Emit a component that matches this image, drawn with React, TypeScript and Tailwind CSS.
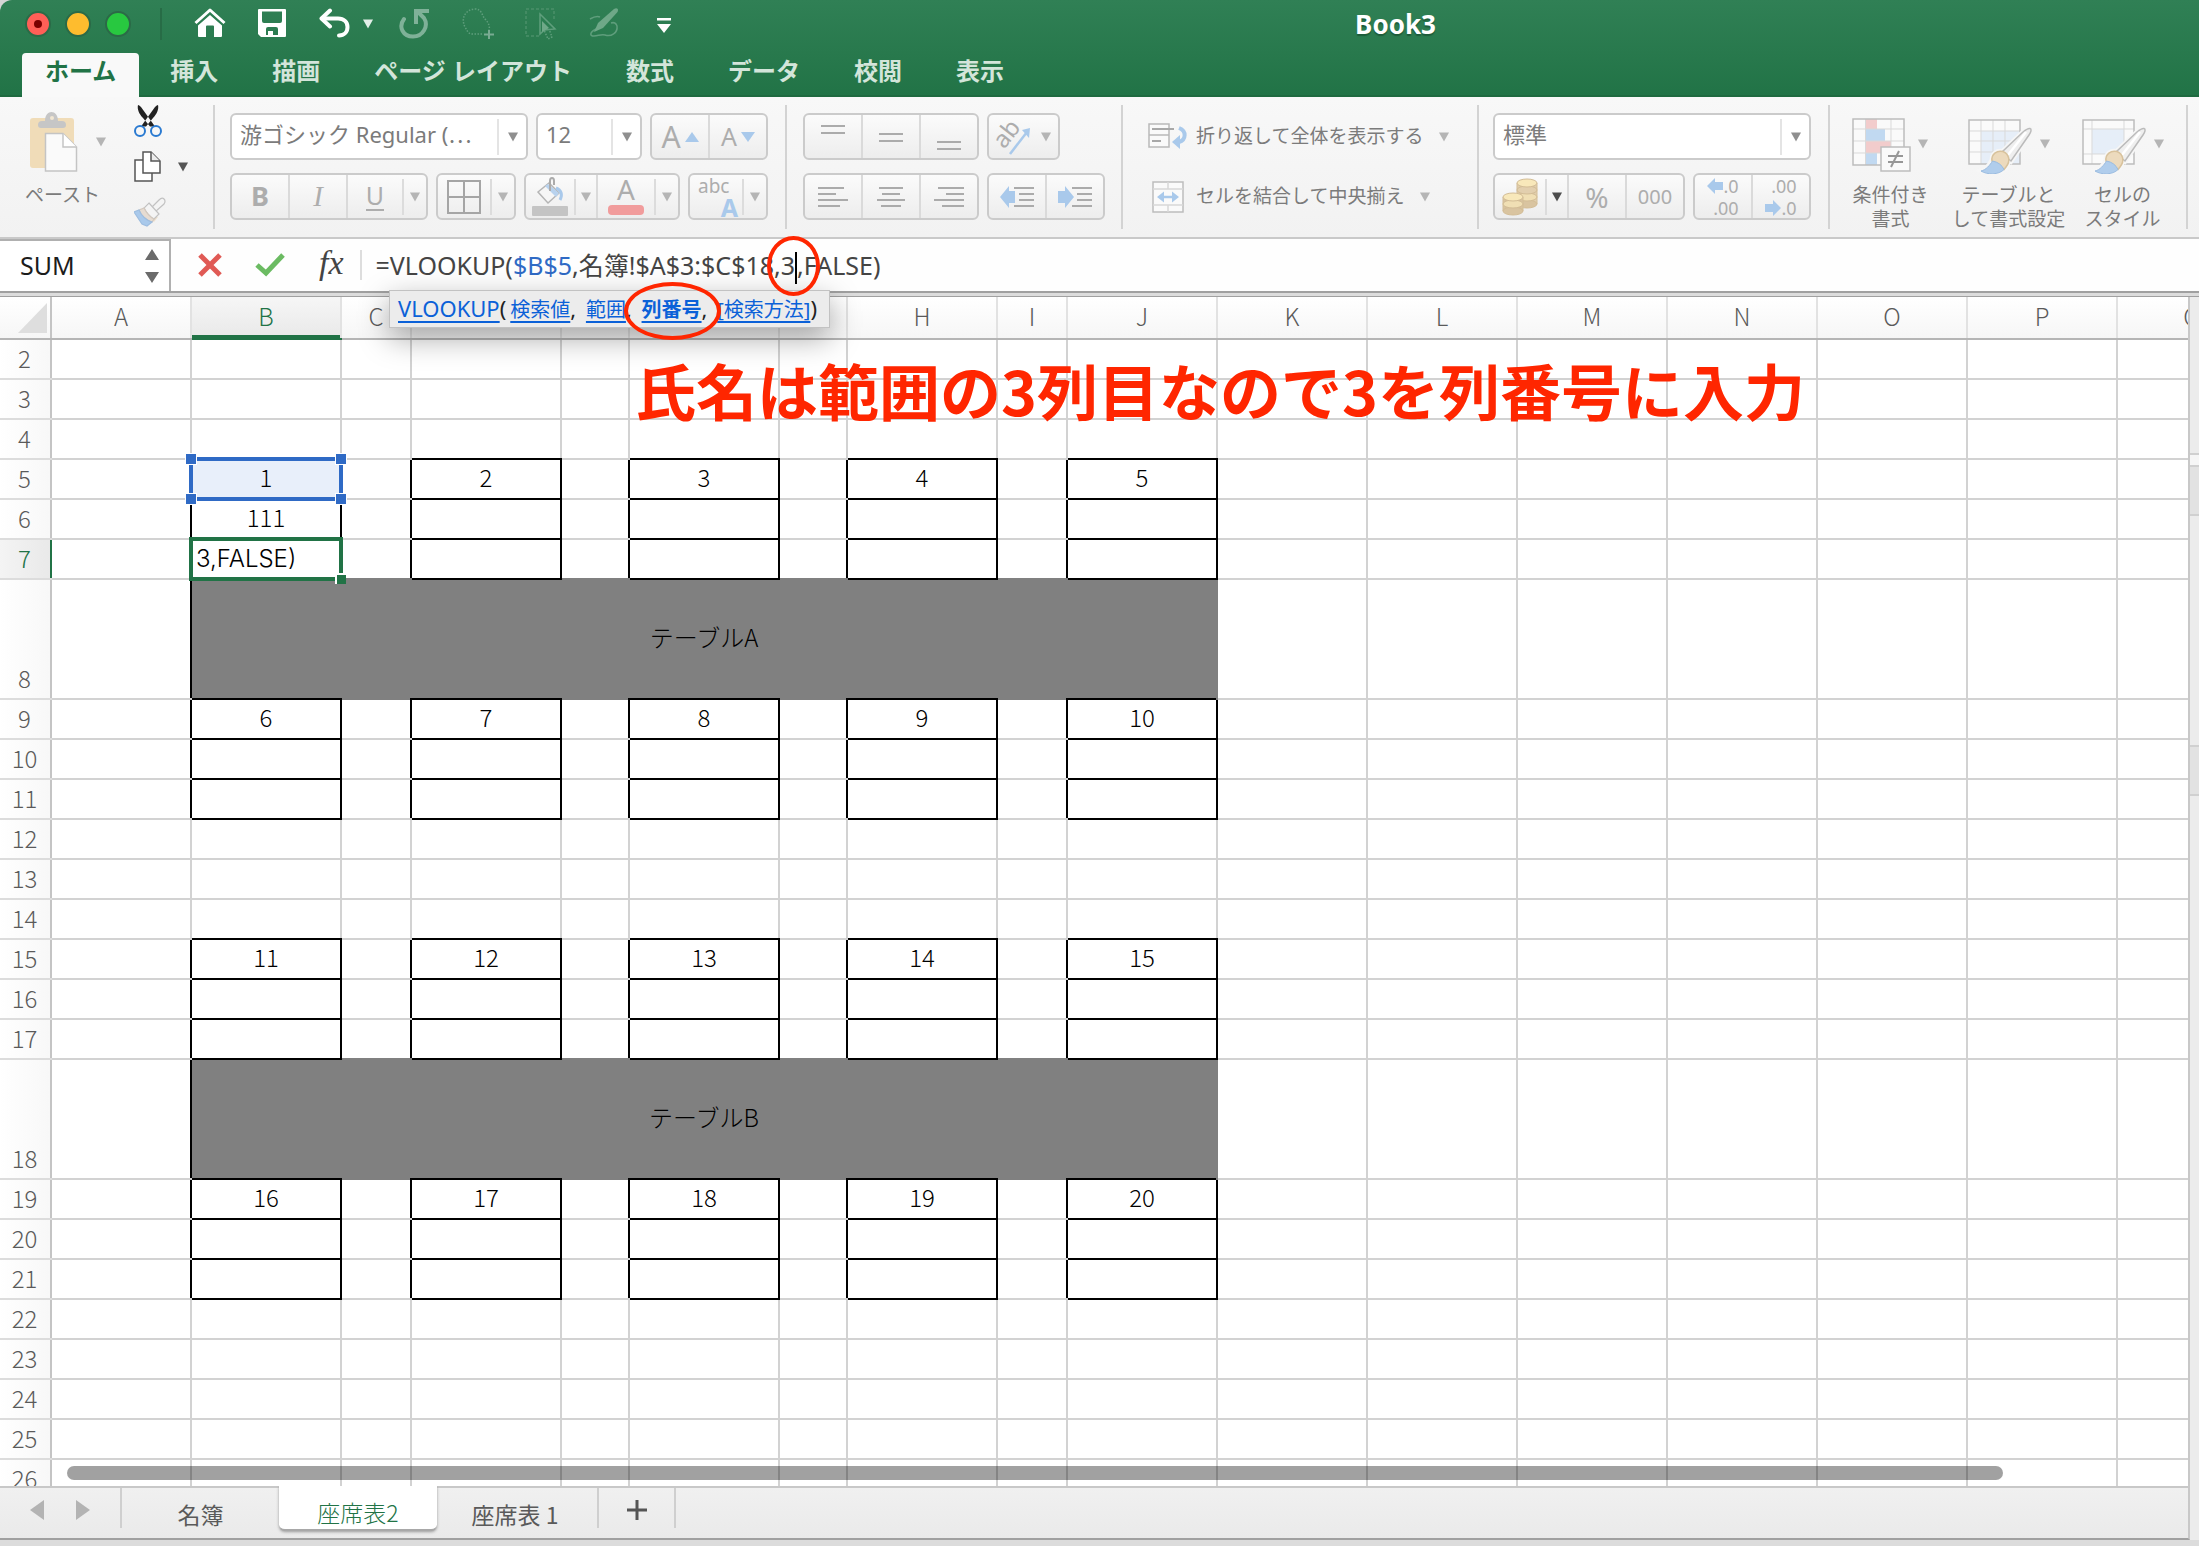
import React, { type ReactNode } from "react";

type Kids = { children?: ReactNode };

const COLS: { id: string; w: string }[] = [
  { id: "A", w: "w-[140px]" },
  { id: "B", w: "w-[150px]" },
  { id: "C", w: "w-[70px]" },
  { id: "D", w: "w-[150px]" },
  { id: "E", w: "w-[68px]" },
  { id: "F", w: "w-[150px]" },
  { id: "G", w: "w-[68px]" },
  { id: "H", w: "w-[150px]" },
  { id: "I", w: "w-[70px]" },
  { id: "J", w: "w-[150px]" },
  { id: "K", w: "w-[150px]" },
  { id: "L", w: "w-[150px]" },
  { id: "M", w: "w-[150px]" },
  { id: "N", w: "w-[150px]" },
  { id: "O", w: "w-[150px]" },
  { id: "P", w: "w-[150px]" },
  { id: "Q", w: "w-[150px]" },
];

const ROWS = Array.from({ length: 25 }, (_, i) => i + 2);
const SEAT_COLS = [1, 3, 5, 7, 9];
const SEAT_START: Record<number, number> = { 5: 1, 9: 6, 15: 11, 19: 16 };
const TABLES: Record<number, string> = { 8: "テーブルA", 18: "テーブルB" };

const boxed = (r: number, c: number) =>
  SEAT_COLS.includes(c) && [5, 6, 7, 9, 10, 11, 15, 16, 17, 19, 20, 21].includes(r);

const shaded = (r: number, c: number) => TABLES[r] !== undefined && c >= 1 && c <= 9;

const edge = (r: number, c: number) => {
  const me = boxed(r, c);
  const tableLeft = c === 0 && TABLES[r] !== undefined;
  return [
    me || boxed(r - 1, c) ? "border-t-black" : shaded(r - 1, c) ? "border-t-[#808080]" : "border-t-[#d2d2d2]",
    me || boxed(r + 1, c) ? "border-b-black" : shaded(r + 1, c) ? "border-b-[#808080]" : "border-b-[#d2d2d2]",
    me || boxed(r, c - 1) ? "border-l-black" : "border-l-[#d2d2d2]",
    me || boxed(r, c + 1) || tableLeft ? "border-r-black" : "border-r-[#d2d2d2]",
  ].join(" ");
};

function cellText(r: number, c: number): string {
  if (r === 6 && c === 1) return "111";
  const i = SEAT_COLS.indexOf(c);
  if (SEAT_START[r] !== undefined && i >= 0) return String(SEAT_START[r] + i);
  return "";
}

function Caret({ tone = "text-[#b5b5b5]" }: { tone?: string }) {
  return (
    <svg className={"h-[10px] w-[10px] shrink-0 " + tone} viewBox="0 0 10 10" fill="currentColor">
      <path d="M0 0.5H10L5 9.5Z" />
    </svg>
  );
}

function Separator() {
  return <div className="h-[124px] w-[2px] shrink-0 bg-[#d3d3d3]" />;
}

function Group({ children }: Kids) {
  return (
    <div className="flex h-[47px] shrink-0 rounded-md border-2 border-[#cbcbcb] bg-linear-to-b from-[#fbfbfb] to-[#ededed] text-[#adadad]">
      {children}
    </div>
  );
}

function Btn({ w, label, last, children }: Kids & { w: string; label: string; last?: boolean }) {
  return (
    <button
      aria-label={label}
      className={
        "flex h-full items-center justify-center " + w + (last ? "" : " border-r-2 border-[#dadada]")
      }
    >
      {children}
    </button>
  );
}

function SplitCaret({ label, tone, edged }: { label: string; tone?: string; edged?: boolean }) {
  return (
    <button
      aria-label={label}
      className={"flex h-full w-[24px] items-center " + (edged ? "border-r-2 border-[#dadada]" : "")}
    >
      <span className="h-9 w-[2px] bg-[#dcdcdc]" />
      <span className="flex flex-1 justify-center">
        <Caret tone={tone} />
      </span>
    </button>
  );
}

function Select({ w, label, value }: { w: string; label: string; value: string }) {
  return (
    <label
      className={
        "flex h-[47px] shrink-0 items-center rounded-md border-2 border-[#cbcbcb] bg-white text-[22px] text-[#7b7b7b] " + w
      }
    >
      <select
        aria-label={label}
        className="h-full min-w-0 flex-1 appearance-none bg-transparent pb-1 pl-2 outline-none"
      >
        <option>{value}</option>
      </select>
      <span className="h-9 w-[2px] bg-[#e4e4e4]" />
      <span className="flex w-[27px] justify-center">
        <Caret tone="text-[#8f8f8f]" />
      </span>
    </label>
  );
}

function Lines({ rows }: { rows: [number, number, number][] }) {
  return (
    <svg className="h-[40px] w-[40px]" viewBox="0 0 40 40" stroke="#ababab" strokeWidth="2">
      {rows.map(([x1, x2, y], i) => (
        <path key={i} d={`M${x1} ${y}H${x2}`} />
      ))}
    </svg>
  );
}

function Brush() {
  return (
    <>
      <path
        d="M62 21.500C64 22 63 25 61 28L43 54 33 46 55 25C58 22.500 60 21 62 21.500ZM24 53C24 47 29 43 35 44.500C41 47 43 54 38 60L36 62.500C30 68 18 67.500 13 64C18 63 21 59 24 53Z"
        fill="#f6f6f6"
        stroke="#f6f6f6"
        strokeWidth="5"
      />
      <path d="M62 21.500C64 22 63 25 61 28L43 54 33 46 55 25C58 22.500 60 21 62 21.500Z" fill="#efefef" stroke="#bbbbbb" strokeWidth="1.500" />
      <path d="M58 25L40 48" stroke="#ffffff" strokeWidth="2.500" />
      <path d="M24 54C23 47 29 43 35 44.500C41 47 43 54 38 60L36 62.500Z" fill="#ecdabd" stroke="#d8c29c" strokeWidth="1.500" />
      <path d="M24.500 54C22 58 18 63 13 64C19 68 31 68 36 62.500C34 58 30 55 24.500 54Z" fill="#b0cdec" stroke="#9bbce0" strokeWidth="1" />
    </>
  );
}

function TitleBar() {
  return (
    <div className="flex h-[48px] items-center pr-20 pl-[25px] text-white">
      <div className="flex gap-[14px]">
        <button aria-label="閉じる" className="flex size-[26px] items-center justify-center rounded-full border-2 border-[#2b6a47] bg-[#ff5f57]">
          <span className="size-2 rounded-full bg-[#7a0000]" />
        </button>
        <button aria-label="しまう" className="size-[26px] rounded-full border-2 border-[#2b6a47] bg-[#febc2e]" />
        <button aria-label="拡大" className="size-[26px] rounded-full border-2 border-[#2b6a47] bg-[#28c840]" />
      </div>
      <span className="ml-[29px] h-8 w-[2px] bg-[#276c46]" />
      <div className="ml-8 flex items-center">
        <button aria-label="ホーム">
          <svg className="h-8 w-8" viewBox="0 0 32 32" fill="none" stroke="#fff">
            <path d="M1.500 15 16 2 30.500 15" strokeWidth="3" strokeLinejoin="round" />
            <path d="M4 17.500 16 7 28 17.500V28Q28 29 27 29H20V18.500Q20 17.500 19 17.500H13Q12 17.500 12 18.500V29H5Q4 29 4 28Z" fill="#fff" stroke="none" />
          </svg>
        </button>
        <button aria-label="保存" className="ml-8">
          <svg className="h-8 w-7" viewBox="0 0 28 32">
            <path fillRule="evenodd" fill="#fff" d="M1 1H27Q28 1 28 2V28Q28 29 27 29H3L0 26V2Q0 1 1 1ZM4 3.500V13Q4 15 6 15H22Q24 15 24 13V3.500ZM10 19Q8 19 8 21V27H10V23H15V27H20V21Q20 19 18 19Z" />
          </svg>
        </button>
        <button aria-label="元に戻す" className="ml-[33px]">
          <svg className="h-8 w-8" viewBox="0 0 32 32" fill="none" stroke="#fff" strokeWidth="4" strokeLinecap="round" strokeLinejoin="round">
            <path d="M11 2.500 2.500 10.500 11 18.500" />
            <path d="M3 10.500H19C25 10.500 28.500 14 28.500 19S25 27.500 20 27.500" />
          </svg>
        </button>
        <button aria-label="元に戻すの履歴" className="ml-3">
          <Caret tone="text-[#e3efe8]" />
        </button>
        <button aria-label="やり直し" className="ml-[26px]">
          <svg className="h-8 w-8" viewBox="0 0 32 32" fill="none" stroke="#7fb198" strokeWidth="4">
            <path strokeLinecap="round" d="M5 11C-1 19 4 28.500 14 28.500S30 18 25 10L19 4" />
            <path d="M30 3H17V16" />
          </svg>
        </button>
        <button aria-label="図形を追加" className="ml-[31px]">
          <svg className="h-8 w-8" viewBox="0 0 32 32" fill="none" stroke="#5f9e7c" strokeWidth="1.500">
            <path strokeDasharray="1.500 1.500" d="M20 26H10C6 26 5 22 3 19C-2 9 5 1 13 1C20 1 20 8 23 11C27 15 28 19 27 22" />
            <path strokeWidth="2" stroke="#79ab92" d="M27 22V31M22 26.500H32" />
          </svg>
        </button>
        <button aria-label="オブジェクトの選択" className="ml-[31px]">
          <svg className="h-8 w-8" viewBox="0 0 32 32" fill="none" stroke="#5f9e7c" strokeWidth="1.500">
            <path strokeDasharray="3 2" stroke="#4b9069" d="M14 28H1V1H29V12" />
            <path d="M15 6V26L19.500 22L30 21Z" />
            <path fill="#6fa888" stroke="none" d="M17 13V24L24 20Z" />
            <path strokeDasharray="1.500 1.500" d="M19.500 23L23 31L27 29L24 21" />
          </svg>
        </button>
        <button aria-label="インク" className="ml-8">
          <svg className="h-8 w-8" viewBox="0 0 32 32" fill="none" stroke="#5f9e7c" strokeWidth="1.500">
            <path d="M1 11C6 8 9 8 11 9M7 21C1 24 0 28 5 28C9 28 12 26 16 27C22 29 29 25 28 18C27 15 25 14 22 15" />
            <path fill="#6fa888" d="M25 1C28-1 30 1 28.500 4L14 20 5 24 9 15Z" stroke="none" />
          </svg>
        </button>
        <button aria-label="ツールバーのカスタマイズ" className="ml-[35px]">
          <svg className="h-8 w-4" viewBox="0 0 16 32" fill="#fff">
            <path d="M1 10H15V12.500H1ZM1 16H15L8 25Z" />
          </svg>
        </button>
      </div>
      <h1 className="flex-1 text-center text-[26px] font-bold [text-shadow:0_2px_1px_#1d5c3a]">Book3</h1>
    </div>
  );
}

function Tabs() {
  const rest = ["挿入", "描画", "ページ レイアウト", "数式", "データ", "校閲", "表示"];
  return (
    <nav className="flex h-[49px] items-end gap-2 border-b-2 border-[#1f6a40] pl-[22px] text-[24px] font-bold">
      <button className="-mb-[2px] h-[44px] rounded-t-[4px] bg-[#f9f9f9] px-[23px] pb-2 leading-9 text-[#217346]">ホーム</button>
      {rest.map((t) => (
        <button key={t} className="h-[42px] px-[23px] pb-[6px] leading-9 text-[#d3e5da]">
          {t}
        </button>
      ))}
    </nav>
  );
}

function BigButton({ lines, children }: Kids & { lines: string[] }) {
  return (
    <button className="flex flex-col items-center text-[19px] leading-6 text-[#7b7b7b]">
      <span className="flex h-[78px] items-center gap-[6px]">
        {children}
        <Caret />
      </span>
      {lines.map((l) => (
        <span key={l} className="whitespace-nowrap">{l}</span>
      ))}
    </button>
  );
}

function Ribbon() {
  return (
    <div className="flex h-[140px] items-start overflow-hidden bg-linear-to-b from-[#f8f8f8] to-[#f2f2f2] pt-2">
      <div className="flex w-[119px] shrink-0 flex-col pl-[25px] text-[19px] text-[#7b7b7b]">
        <button className="flex h-[74px] items-center gap-[18px] pl-[5px]" aria-label="ペースト">
          <svg className="h-[60px] w-[48px]" viewBox="0 0 48 60">
            <rect x="0" y="6" width="44" height="50" rx="3" fill="#f0dcb8" />
            <path d="M8 13Q8 9 12 9H15C15-3 28-3 28 9H32Q36 9 36 13Q36 16 33 16H11Q8 16 8 13Z" fill="#c6c6c6" />
            <circle cx="22" cy="6" r="2" fill="#f2e7d2" />
            <path d="M15.500 21.500H33L46.500 35V59H15.500Z" fill="#fafafa" stroke="#c4c4c4" strokeWidth="1.500" />
            <path d="M33 21.500V35H46.500" fill="#fff" stroke="#c4c4c4" strokeWidth="1.500" />
          </svg>
          <Caret />
        </button>
        <span className="leading-8">ペースト</span>
      </div>
      <div className="flex w-[94px] shrink-0 flex-col pl-[15px]">
        <button aria-label="切り取り" className="h-8 w-8">
          <svg className="h-8 w-8" viewBox="0 0 32 32" fill="none">
            <path d="M4 0C3 4 5 9 9 13L16 21.500H21L18.500 18 7 2Q5 0 4 0ZM24 0C25 4 23 9 19 13L12 21.500H7L9.500 18 21 2Q23 0 24 0Z" fill="#222" />
            <circle cx="6" cy="26" r="5" stroke="#2a7ad1" strokeWidth="2" />
            <circle cx="22" cy="26" r="5" stroke="#2a7ad1" strokeWidth="2" />
          </svg>
        </button>
        <div className="mt-[14px] flex items-center gap-3">
          <button aria-label="コピー">
            <svg className="h-8 w-8" viewBox="0 0 32 32" fill="#fff" stroke="#555" strokeWidth="1.500">
              <path d="M1 9H18V30H1Z" />
              <path d="M9 1H17L26 10V22H9Z" />
              <path d="M17 1V10H26" fill="#ececec" />
            </svg>
          </button>
          <button aria-label="コピーのオプション">
            <Caret tone="text-[#555555]" />
          </button>
        </div>
        <button aria-label="書式のコピー" className="mt-[14px] h-8 w-8">
          <svg className="h-8 w-8" viewBox="0 0 32 32" strokeWidth="1.200">
            <path d="M30 2Q32 4 30 7L21 15L17 11L25 3Q28 0 30 2Z" fill="#f4f4f4" stroke="#c2c2c2" />
            <path d="M6 11L13 16L24 20L20 25Z" fill="#ecdfcd" />
            <path d="M15 6L25 17L20 22Q14 19 10 11Z" fill="#f4f4f4" stroke="#c2c2c2" />
            <path d="M10 11Q14 19 20 22L18 25C12 23 7 18 5 13Z" fill="#e6dcd2" stroke="#d2c8be" />
            <path d="M5 13C7 18 12 23 18 25L13 29L8 27L0 15Z" fill="#a9c9eb" stroke="#9dbde0" />
          </svg>
        </button>
      </div>
      <Separator />

      <div className="flex w-[570px] shrink-0 flex-col gap-[13px] pt-2 pl-[15px]">
        <div className="flex gap-2">
          <Select w="w-[298px]" label="フォント" value="游ゴシック Regular (⋯" />
          <Select w="w-[106px]" label="フォント サイズ" value="12" />
          <Group>
            <Btn w="w-[58px]" label="フォント サイズの拡大">
              <span className="text-[30px] leading-10">A</span>
              <svg className="ml-1 h-3 w-[14px]" viewBox="0 0 14 12"><path fill="#a9c9eb" d="M0 11H14L7 1Z" /></svg>
            </Btn>
            <Btn w="w-[56px]" label="フォント サイズの縮小" last>
              <span className="text-[25px]">A</span>
              <svg className="ml-1 h-3 w-[14px]" viewBox="0 0 14 12"><path fill="#a9c9eb" d="M0 1H14L7 11Z" /></svg>
            </Btn>
          </Group>
        </div>
        <div className="flex gap-2">
          <Group>
            <Btn w="w-[58px]" label="太字"><b className="text-[27px]">B</b></Btn>
            <Btn w="w-[58px]" label="斜体"><i className="font-['Liberation_Serif'] text-[29px]">I</i></Btn>
            <button aria-label="下線" className="flex w-[54px] items-center justify-center text-[25px]">
              <span className="border-b-2 border-[#adadad] leading-[27px]">U</span>
            </button>
            <SplitCaret label="下線のオプション" />
          </Group>
          <Group>
            <button aria-label="罫線" className="flex w-[52px] items-center justify-center">
              <svg className="h-[34px] w-[34px]" viewBox="0 0 34 34" fill="none" stroke="#a5a5a5" strokeWidth="2">
                <path d="M1 1H33V33H1ZM17 1V33M1 17H33" />
              </svg>
            </button>
            <SplitCaret label="罫線のオプション" />
          </Group>
          <Group>
            <button aria-label="塗りつぶしの色" className="flex w-[48px] items-center justify-center">
              <svg className="h-[40px] w-[36px]" viewBox="0 0 36 40" fill="none">
                <rect y="29" width="36" height="10" rx="1" fill="#c4c4c4" />
                <path d="M17 6L27 16L16 26L6 15Z" fill="#f6f6f6" stroke="#b5b5b5" strokeWidth="1.500" />
                <path d="M13 9L24 20L27 16L16 7Z" fill="#b8d2ee" />
                <path d="M24 11C29 13 31 17 28 23" stroke="#a9c9eb" strokeWidth="3" />
                <path d="M18 14V4C18 0 22 0 22 4V8" stroke="#ababab" strokeWidth="2" />
              </svg>
            </button>
            <SplitCaret label="塗りつぶしの色の一覧" edged />
            <button aria-label="フォントの色" className="flex w-[56px] flex-col items-center justify-start">
              <span className="h-7 text-[28px] leading-7">A</span>
              <span className="mt-[2px] h-[10px] w-9 rounded-sm bg-[#f19c9c]" />
            </button>
            <SplitCaret label="フォントの色の一覧" />
          </Group>
          <Group>
            <button aria-label="ふりがな" className="flex w-[52px] flex-col justify-center text-left">
              <span className="pl-2 text-[19px] leading-5">abc</span>
              <span className="pr-1 text-right text-[25px] leading-[22px] font-bold text-[#a9c9eb]">A</span>
            </button>
            <SplitCaret label="ふりがなのオプション" />
          </Group>
        </div>
      </div>
      <Separator />

      <div className="flex w-[334px] shrink-0 flex-col gap-[13px] pt-2 pl-4">
        <div className="flex gap-2">
          <Group>
            <Btn w="w-[58px]" label="上揃え"><Lines rows={[[8, 32, 9], [8, 32, 16]]} /></Btn>
            <Btn w="w-[58px]" label="上下中央揃え"><Lines rows={[[8, 32, 17], [8, 32, 24]]} /></Btn>
            <Btn w="w-[56px]" label="下揃え" last><Lines rows={[[8, 32, 25], [8, 32, 32]]} /></Btn>
          </Group>
          <Group>
            <button aria-label="方向" className="flex w-[69px] items-center justify-center gap-2">
              <svg className="h-10 w-9 overflow-visible" viewBox="0 0 36 40">
                <text x="3" y="28" fontSize="24" fill="#adadad" transform="rotate(-52 10 26)">ab</text>
                <path d="M13 37L30 15" stroke="#a9c9eb" strokeWidth="2.500" />
                <path d="M33 11L32 21L25 13Z" fill="#a9c9eb" />
              </svg>
              <Caret />
            </button>
          </Group>
        </div>
        <div className="flex gap-2">
          <Group>
            <Btn w="w-[58px]" label="左揃え"><Lines rows={[[5, 31, 11], [5, 23, 17], [5, 35, 23], [5, 27, 29]]} /></Btn>
            <Btn w="w-[58px]" label="中央揃え"><Lines rows={[[8, 32, 11], [11, 29, 17], [6, 34, 23], [10, 30, 29]]} /></Btn>
            <Btn w="w-[56px]" label="右揃え" last><Lines rows={[[9, 35, 11], [17, 35, 17], [5, 35, 23], [13, 35, 29]]} /></Btn>
          </Group>
          <Group>
            <Btn w="w-[58px]" label="インデントを減らす">
              <svg className="h-10 w-9" viewBox="0 0 36 40">
                <path d="M1 20L10 9V14H16V26H10V31Z" fill="#a9c9eb" />
                <path d="M15 11H35M20 17H35M20 23H35M15 29H35" stroke="#ababab" strokeWidth="2" />
              </svg>
            </Btn>
            <Btn w="w-[56px]" label="インデントを増やす" last>
              <svg className="h-10 w-9" viewBox="0 0 36 40">
                <path d="M17 20L8 9V14H1V26H8V31Z" fill="#a9c9eb" />
                <path d="M15 11H35M20 17H35M20 23H35M15 29H35" stroke="#ababab" strokeWidth="2" />
              </svg>
            </Btn>
          </Group>
        </div>
      </div>
      <Separator />

      <div className="flex w-[354px] shrink-0 flex-col gap-[13px] pt-2 pl-[25px] text-[19px] text-[#7b7b7b]">
        <button className="flex h-[47px] items-center gap-2">
          <svg className="h-9 w-10" viewBox="0 0 40 36" fill="none" stroke="#b9b9b9" strokeWidth="1.500">
            <path d="M1 5H21V28H1ZM1 16H21" fill="#fafafa" />
            <path d="M4 10H26M4 22H13" strokeWidth="2" stroke="#a8a8a8" />
            <path d="M31 9C39 12 38 21 31 23" stroke="#a9c9eb" strokeWidth="4" />
            <path d="M24 23L32 16V30Z" fill="#a9c9eb" stroke="none" />
          </svg>
          <span>折り返して全体を表示する</span>
          <span className="ml-2"><Caret /></span>
        </button>
        <button className="flex h-[47px] items-center gap-2">
          <svg className="mx-1 h-8 w-8" viewBox="0 0 32 32" fill="none" stroke="#bdbdbd" strokeWidth="1.500">
            <path d="M1 1H31V31H1Z" fill="#fafafa" />
            <path d="M1 8H31M1 24H31M16 1V8M16 24V31" stroke="#d8d8d8" />
            <path d="M8 16H24" stroke="#a9c9eb" strokeWidth="2.500" />
            <path d="M5 16L12 10.500V21.500ZM27 16L20 10.500V21.500Z" fill="#a9c9eb" stroke="none" />
          </svg>
          <span>セルを結合して中央揃え</span>
          <span className="ml-2"><Caret /></span>
        </button>
      </div>
      <Separator />

      <div className="flex w-[349px] shrink-0 flex-col gap-[13px] pt-2 pl-[14px]">
        <Select w="w-[318px]" label="表示形式" value="標準" />
        <div className="flex gap-2">
          <Group>
            <button aria-label="通貨" className="flex w-[50px] items-center justify-center">
              <svg className="h-10 w-9" viewBox="0 0 36 38" stroke="#d3bd96" strokeWidth="1">
                <path d="M15 5V26H35V5Z" fill="#e2cfae" />
                <ellipse cx="25" cy="26" rx="10" ry="4" fill="#d9c4a0" />
                <ellipse cx="25" cy="19" rx="10" ry="4" fill="#f0dfb4" />
                <ellipse cx="25" cy="12" rx="10" ry="4" fill="#e2cfae" />
                <ellipse cx="25" cy="5" rx="10" ry="4" fill="#f8e8ba" />
                <path d="M1 19V33H21V19Z" fill="#d9c4a0" />
                <ellipse cx="11" cy="33" rx="10" ry="4" fill="#d9c4a0" />
                <ellipse cx="11" cy="26" rx="10" ry="4" fill="#f0dfb4" />
                <ellipse cx="11" cy="19" rx="10" ry="4" fill="#f8e8ba" />
              </svg>
            </button>
            <SplitCaret label="通貨のオプション" tone="text-[#4d4d4d]" edged />
            <Btn w="w-[58px]" label="パーセント"><span className="text-[28px] leading-10">%</span></Btn>
            <Btn w="w-[56px]" label="桁区切り" last><span className="text-[20px]">000</span></Btn>
          </Group>
          <Group>
            <Btn w="w-[58px]" label="小数点以下の桁数を増やす">
              <span className="flex flex-col items-end text-[18px] leading-[22px]">
                <span className="flex items-center">
                  <svg className="h-4 w-4" viewBox="0 0 16 16"><path fill="#a9c9eb" d="M0 8L8 0V4H16V12H8V16Z" /></svg>.0
                </span>
                <span>.00</span>
              </span>
            </Btn>
            <Btn w="w-[56px]" label="小数点以下の桁数を減らす" last>
              <span className="flex flex-col items-end text-[18px] leading-[22px]">
                <span>.00</span>
                <span className="flex items-center">
                  <svg className="h-4 w-4" viewBox="0 0 16 16"><path fill="#a9c9eb" d="M16 8L8 0V4H0V12H8V16Z" /></svg>.0
                </span>
              </span>
            </Btn>
          </Group>
        </div>
      </div>
      <Separator />

      <div className="flex w-[356px] shrink-0">
        <div className="flex w-[121px] justify-center">
          <BigButton lines={["条件付き", "書式"]}>
            <svg className="h-[60px] w-[60px]" viewBox="0 -4 60 60" strokeWidth="1.500">
              <path d="M1 1H52V47H1Z" fill="#fafafa" />
              <path d="M14 1H25V11H14Z M14 23H39V35H14Z" fill="#f2cccc" />
              <path d="M14 11H33V23H14Z M14 35H25V47H14Z" fill="#c1d9f1" />
              <path d="M1 11H52M1 23H52M1 35H52M13.500 1V47M39 1V47" fill="none" stroke="#d9d9d9" strokeWidth="1" />
              <path d="M1 1H52V47H1Z" fill="none" stroke="#bdbdbd" />
              <path d="M29 29H58V53H29Z" fill="#fafafa" stroke="#bdbdbd" />
              <path d="M36 38H51M36 44H51M47 33L39 49" stroke="#979797" strokeWidth="2" />
            </svg>
          </BigButton>
        </div>
        <div className="flex w-[115px] justify-center">
          <BigButton lines={["テーブルと", "して書式設定"]}>
            <svg className="h-[60px] w-[66px]" viewBox="0 7 66 60" strokeWidth="1.500">
              <path d="M1 13H52V57H1Z" fill="#fafafa" />
              <path d="M13 24H52V57H13Z" fill="#e6eef8" />
              <path d="M1 24H52M1 34H52M1 45H52M13 13V57M25 13V57M37 13V57" fill="none" stroke="#d9d9d9" strokeWidth="1" />
              <path d="M1 13H52V57H1Z" fill="none" stroke="#bdbdbd" />
              <Brush />
            </svg>
          </BigButton>
        </div>
        <div className="flex w-[113px] justify-center">
          <BigButton lines={["セルの", "スタイル"]}>
            <svg className="h-[60px] w-[66px]" viewBox="0 7 66 60" strokeWidth="1.500">
              <path d="M1 13H52V57H1Z" fill="#fafafa" />
              <path d="M10 22H42V47H10Z" fill="#e6eef8" />
              <path d="M1 22H52M1 47H52M10 13V57M42 13V57" fill="none" stroke="#d9d9d9" strokeWidth="1" />
              <path d="M1 13H52V57H1Z" fill="none" stroke="#bdbdbd" />
              <Brush />
            </svg>
          </BigButton>
        </div>
      </div>
      <Separator />
    </div>
  );
}

function FormulaBar() {
  return (
    <div className="flex h-[54px] items-stretch border-t-2 border-[#c9c9c9] bg-[#fefefe]">
      <div className="flex w-[171px] items-center justify-between border-t-2 border-r-2 border-[#b0b0b0] bg-white pr-[10px] pl-5">
        <input aria-label="名前ボックス" defaultValue="SUM" className="w-[100px] text-[25px] text-[#1c1c1c] outline-none" />
        <svg className="h-[36px] w-[14px]" viewBox="0 0 14 36" fill="#6b6b6b">
          <path d="M0 12H14L7 1ZM0 24H14L7 35Z" />
        </svg>
      </div>
      <div className="flex items-center pl-[27px]">
        <button aria-label="キャンセル">
          <svg className="h-6 w-6" viewBox="0 0 24 24" stroke="#e05a55" strokeWidth="5">
            <path d="M2 2L22 22M22 2L2 22" />
          </svg>
        </button>
        <button aria-label="入力" className="ml-[33px]">
          <svg className="h-6 w-[30px]" viewBox="0 0 30 24" fill="none" stroke="#6bbb62" strokeWidth="5">
            <path d="M2 12L11 20L28 2" />
          </svg>
        </button>
        <button aria-label="関数の挿入" className="ml-[34px] pb-1 font-['Liberation_Serif'] text-[34px] leading-10 text-[#444444] italic">
          fx
        </button>
        <span className="ml-4 h-[30px] w-[2px] bg-[#dddddd]" />
      </div>
      <div aria-label="数式バー" className="flex-1 pl-[14px] font-['Noto_Sans','Noto_Sans_CJK_JP',sans-serif] text-[25px] leading-[52px] whitespace-nowrap text-[#444444]">
        =VLOOKUP(<span className="text-[#2f6ac5]">$B$5</span>,名簿!$A$3:$C$18,3
        <span className="inline-block h-8 w-[2px] bg-black align-middle" />
        ,FALSE)
      </div>
    </div>
  );
}

function Sheet() {
  return (
    <div className="relative min-h-0 flex-1 overflow-hidden border-r-2 border-[#c8c8c8] bg-white">
      <table className="-ml-px w-0 table-fixed border-collapse text-[24px] leading-8 font-light text-black">
        <colgroup>
          <col className="w-[52px]" />
          {COLS.map((c) => (
            <col key={c.id} className={c.w} />
          ))}
        </colgroup>
        <thead>
          <tr className="h-[42px] bg-linear-to-b from-white to-[#f6f6f6] text-[#5a5a5a]">
            <th scope="col" aria-label="すべて選択" className="border-r-2 border-b-2 border-r-[#c4c4c4] border-b-[#b5b5b5] p-0">
              <svg className="ml-auto h-[36px] w-8" viewBox="0 0 32 36" fill="#dedede"><path d="M29 3V33H0Z" /></svg>
            </th>
            {COLS.map((c) => (
              <th
                key={c.id}
                scope="col"
                className={
                  "border-r-2 border-b-2 border-r-[#e2e2e2] p-0 pb-1 font-light " +
                  (c.id === "B"
                    ? "border-b-[#217346] bg-linear-to-b from-[#f6f6f6] to-[#e9e9e9] text-[#217346] shadow-[inset_0_-3px_0_#217346]"
                    : "border-b-[#b5b5b5]")
                }
              >
                {c.id}
              </th>
            ))}
          </tr>
        </thead>
        <tbody>
          {ROWS.map((r) => (
            <tr key={r} className={TABLES[r] ? "h-[120px]" : "h-[40px]"}>
              <th
                scope="row"
                className={
                  "border-r-2 border-b-2 border-b-[#dcdcdc] p-0 pb-1 align-bottom font-light " +
                  (r === 7
                    ? "border-r-[#217346] bg-linear-to-r from-[#f4f4f4] to-[#e9e9e9] text-[#217346]"
                    : "border-r-[#c4c4c4] bg-linear-to-r from-white to-[#f8f8f8] text-[#5a5a5a]")
                }
              >
                {r}
              </th>
              {COLS.map((c, i) => {
                if (shaded(r, i)) {
                  return i === 1 ? (
                    <td key={c.id} colSpan={9} className="border-r-2 border-l-2 border-r-[#808080] border-l-black bg-[#808080] p-0 pb-1 text-center">
                      {TABLES[r]}
                    </td>
                  ) : null;
                }
                if (r === 5 && i === 1) {
                  return (
                    <td key={c.id} className={"relative border-2 bg-[#e8effa] p-0 pb-1 text-center " + edge(r, i)}>
                      1
                      <span className="absolute -inset-[3px] border-4 border-[#2f6ac5]" />
                      <span className="absolute -top-[7px] -left-[7px] size-3 border border-white bg-[#2f6ac5]" />
                      <span className="absolute -top-[7px] -right-[7px] size-3 border border-white bg-[#2f6ac5]" />
                      <span className="absolute -bottom-[7px] -left-[7px] size-3 border border-white bg-[#2f6ac5]" />
                      <span className="absolute -right-[7px] -bottom-[7px] size-3 border border-white bg-[#2f6ac5]" />
                    </td>
                  );
                }
                if (r === 7 && i === 1) {
                  return (
                    <td key={c.id} className={"relative border-2 p-0 pl-1 text-left font-['Inter',sans-serif] " + edge(r, i)}>
                      3,FALSE)
                      <span className="absolute -inset-[3px] border-4 border-[#217346]" />
                      <span className="absolute -right-[6px] -bottom-[6px] size-[11px] border-t-2 border-l-2 border-white bg-[#217346]" />
                    </td>
                  );
                }
                return (
                  <td key={c.id} className={"border-2 p-0 pb-1 text-center " + edge(r, i)}>
                    {cellText(r, i)}
                  </td>
                );
              })}
            </tr>
          ))}
        </tbody>
      </table>
      <div className="absolute right-[185px] bottom-[6px] left-[67px] h-[14px] rounded-full bg-black/37" />
    </div>
  );
}

function SheetTabs() {
  return (
    <div className="flex h-[54px] shrink-0 items-start border-t-2 border-r-2 border-b-2 border-t-[#c8c8c8] border-r-[#c8c8c8] border-b-[#a0a0a0] bg-linear-to-b from-[#f0f0f0] to-[#eaeaea] text-[23px] text-[#5a5a5a]">
      <div className="flex h-10 w-[122px] items-center gap-8 border-r-2 border-[#cfcfcf] pt-1 pl-[30px]">
        <button aria-label="前のシート">
          <svg className="h-5 w-[14px]" viewBox="0 0 14 20" fill="#b3b3b3"><path d="M14 0V20L0 10Z" /></svg>
        </button>
        <button aria-label="次のシート">
          <svg className="h-5 w-[14px]" viewBox="0 0 14 20" fill="#b3b3b3"><path d="M0 0V20L14 10Z" /></svg>
        </button>
      </div>
      <button className="h-10 w-[157px] pt-2 leading-9">名簿</button>
      <button className="-mt-[2px] h-[45px] w-[158px] rounded-b-md border-b-2 border-[#a8a8a8] bg-white pt-2 leading-9 font-light text-[#217346] shadow-[0_1px_3px_#999]">
        座席表2
      </button>
      <button className="h-10 w-[162px] border-r-2 border-[#cfcfcf] pt-2 pr-1 leading-9">座席表 1</button>
      <button aria-label="シートの追加" className="flex h-10 w-[77px] items-center justify-center border-r-2 border-[#cfcfcf] pt-1">
        <svg className="h-5 w-5" viewBox="0 0 20 20" stroke="#555" strokeWidth="3"><path d="M10 0V20M0 10H20" /></svg>
      </button>
    </div>
  );
}

export default function App() {
  return (
    <div className="bg-[#d5d5d5] font-['Noto_Sans','Noto_Sans_CJK_JP',sans-serif]">
      <div className="relative flex h-screen flex-col overflow-hidden rounded-tl-[12px] bg-[#dcdcdc]">
        <header className="shrink-0 bg-linear-to-b from-[#308055] to-[#217346]">
          <TitleBar />
          <Tabs />
        </header>
        <Ribbon />
        <FormulaBar />
        <div className="h-[6px] shrink-0 border-t-2 border-b border-[#a0a0a0] bg-[#dcdcdc]" />
        <div className="flex min-h-0 flex-1">
          <main className="flex min-w-0 flex-1 flex-col font-['Noto_Sans_CJK_JP',sans-serif]">
            <Sheet />
            <SheetTabs />
          </main>
          <aside className="w-[9px] shrink-0 bg-[#ececec] pt-[156px]">
            <div className="h-3 border-t-2 border-[#d0d0d0] bg-[#f6f6f6]" />
            <div className="h-[51px] border-y-2 border-[#d0d0d0] bg-[#e2e2e2]" />
            <div className="mt-[229px] h-[51px] border-y-2 border-[#d0d0d0] bg-[#e2e2e2]" />
          </aside>
        </div>
        <div className="h-[6px] shrink-0" />

        <div className="absolute top-[290px] left-[389px] h-[38px] border border-[#c2c2c2] bg-[#ececec] pr-3 pl-2 text-[22px] leading-[34px] whitespace-nowrap text-[#222222] shadow-[0_10px_30px_rgba(0,0,0,0.35)]">
          <a href="#vlookup" className="text-[#0b61d8] underline underline-offset-4">VLOOKUP</a>(
          <a href="#value" className="ml-1 text-[20px] text-[#0b61d8] underline underline-offset-4">検索値</a>,{" "}
          <a href="#range" className="ml-1 text-[20px] text-[#0b61d8] underline underline-offset-4">範囲</a>,{" "}
          <a href="#column" className="ml-1 text-[20px] font-bold text-[#0b61d8] underline underline-offset-4">列番号</a>,{" "}
          <a href="#method" className="ml-1 text-[20px] text-[#0b61d8] underline underline-offset-4">[検索方法]</a>)
        </div>
        <div className="absolute top-[236px] left-[767px] h-[60px] w-[53px] rounded-[50%] border-4 border-[#ff2600]" />
        <div className="absolute top-[282px] left-[624px] h-[58px] w-[97px] rounded-[50%] border-4 border-[#ff2600]" />
        <p className="absolute top-[354px] left-[635px] font-['Noto_Sans_CJK_JP',sans-serif] text-[61px] leading-[72px] font-bold whitespace-nowrap text-[#ff2600]">
          氏名は範囲の3列目なので3を列番号に入力
        </p>
      </div>
    </div>
  );
}
